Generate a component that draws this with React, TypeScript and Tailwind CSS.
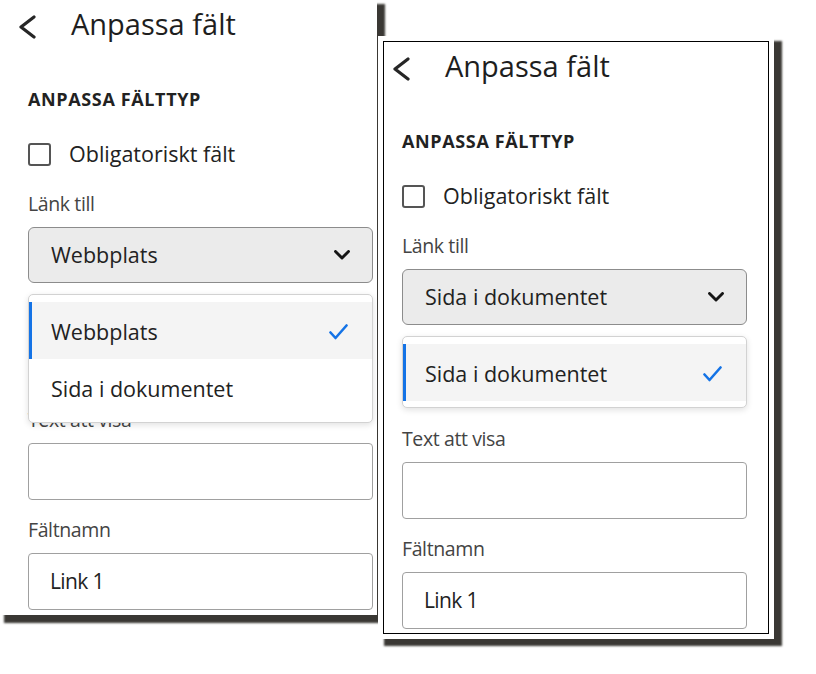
type Option = { label: string; selected?: boolean };

function BackChevron() {
  return (
    <svg
      width="19"
      height="24"
      viewBox="0 0 19 24"
      className="-ml-[10px] mt-[9px] shrink-0"
      fill="none"
      stroke="#262626"
      strokeWidth="3.2"
      strokeLinecap="round"
      strokeLinejoin="round"
    >
      <polyline points="16,2 3,12 16,22" />
    </svg>
  );
}

function DownChevron() {
  return (
    <svg width="16" height="10" viewBox="0 0 16 10" fill="none" stroke="#161616" strokeWidth="2.9" strokeLinecap="round" strokeLinejoin="round">
      <polyline points="1.5,1.5 8,8 14.5,1.5" />
    </svg>
  );
}

function Check() {
  return (
    <svg width="19" height="16" viewBox="0 0 19 16" fill="none" stroke="#1473e6" strokeWidth="2.6" strokeLinecap="round" strokeLinejoin="round">
      <polyline points="1.5,8.5 6.5,14 17.5,1.5" />
    </svg>
  );
}

function FieldPanel({
  value,
  options,
  gapClass,
}: {
  value: string;
  options: Option[];
  gapClass: string;
}) {
  return (
    <>
      <div className="flex items-start pt-[6px]">
        <BackChevron />
        <h1 className="ml-[34px] text-[29px] font-medium leading-[36px] text-[#1e1e1e]">Anpassa fält</h1>
      </div>

      <h2 className="mt-[45px] text-[18px] font-bold leading-[24px] tracking-[0.035em] text-[#222]">
        ANPASSA FÄLTTYP
      </h2>

      <div className="mt-[29px] flex h-[28px] items-center">
        <span className="h-[23px] w-[23px] rounded-[3px] border-2 border-[#555]" />
        <span className="ml-[18px] text-[21.5px] leading-[28px] text-[#222]">Obligatoriskt fält</span>
      </div>

      <p className="mt-[24px] text-[19.5px] leading-[24px] tracking-[-0.02em] text-[#444]">Länk till</p>

      <div className="relative mt-[11px] w-[345px]">
        <div className="flex h-[56px] items-center justify-between rounded-[6px] border-[1.5px] border-[#8c8c8c] bg-[#ebebeb] pl-[22px] pr-[22px]">
          <span className="text-[21.5px] text-[#222]">{value}</span>
          <DownChevron />
        </div>

        <div className="absolute left-0 top-[67px] z-10 w-[345px] rounded-[5px] border border-[#d2d2d2] bg-white pb-[6px] pt-[7px] shadow-[0_2px_6px_rgba(0,0,0,0.12)]">
          {options.map((opt) => (
            <div
              key={opt.label}
              className={`relative flex h-[57px] items-center justify-between pl-[22px] pr-[24px] pt-[3px] ${
                opt.selected ? "bg-[#f4f4f4]" : "bg-white"
              }`}
            >
              {opt.selected && <span className="absolute bottom-0 left-0 top-0 w-[3px] bg-[#1473e6]" />}
              <span className="text-[21.5px] text-[#222]">{opt.label}</span>
              {opt.selected && <Check />}
            </div>
          ))}
        </div>
      </div>

      <p className={`${gapClass} text-[19.5px] leading-[24px] tracking-[-0.02em] text-[#444]`}>Text att visa</p>
      <div className="mt-[11px] h-[57px] w-[345px] rounded-[4px] border-[1.5px] border-[#a0a0a0] bg-white" />

      <p className="mt-[18px] text-[19.5px] leading-[24px] tracking-[-0.02em] text-[#444]">Fältnamn</p>
      <div className="mt-[11px] flex h-[57px] w-[345px] items-center rounded-[4px] border-[1.5px] border-[#a0a0a0] bg-white pl-[21px]">
        <span className="text-[21px] tracking-[-0.03em] text-[#222]">Link 1</span>
      </div>
    </>
  );
}

export default function App() {
  return (
    <div className="relative h-[674px] w-[816px] overflow-hidden bg-white font-['Open_Sans',sans-serif]">
      {/* first screenshot */}
      <div className="absolute left-0 top-0 h-[615px] w-[377px] overflow-hidden bg-white pl-[28px] shadow-[6px_6px_2px_2px_#3a3834]">
        <FieldPanel
          value="Webbplats"
          options={[{ label: "Webbplats", selected: true }, { label: "Sida i dokumentet" }]}
          gapClass="mt-[125px]"
        />
      </div>

      {/* second screenshot, laid over the first */}
      <div className="absolute left-[378px] top-[36px] bg-white p-[5px] shadow-[7px_6px_2px_1px_#3a3834]">
        <div className="h-[593px] w-[386px] overflow-hidden border border-black bg-white pl-[18px]">
          <FieldPanel
            value="Sida i dokumentet"
            options={[{ label: "Sida i dokumentet", selected: true }]}
            gapClass="mt-[102px]"
          />
        </div>
      </div>
    </div>
  );
}
